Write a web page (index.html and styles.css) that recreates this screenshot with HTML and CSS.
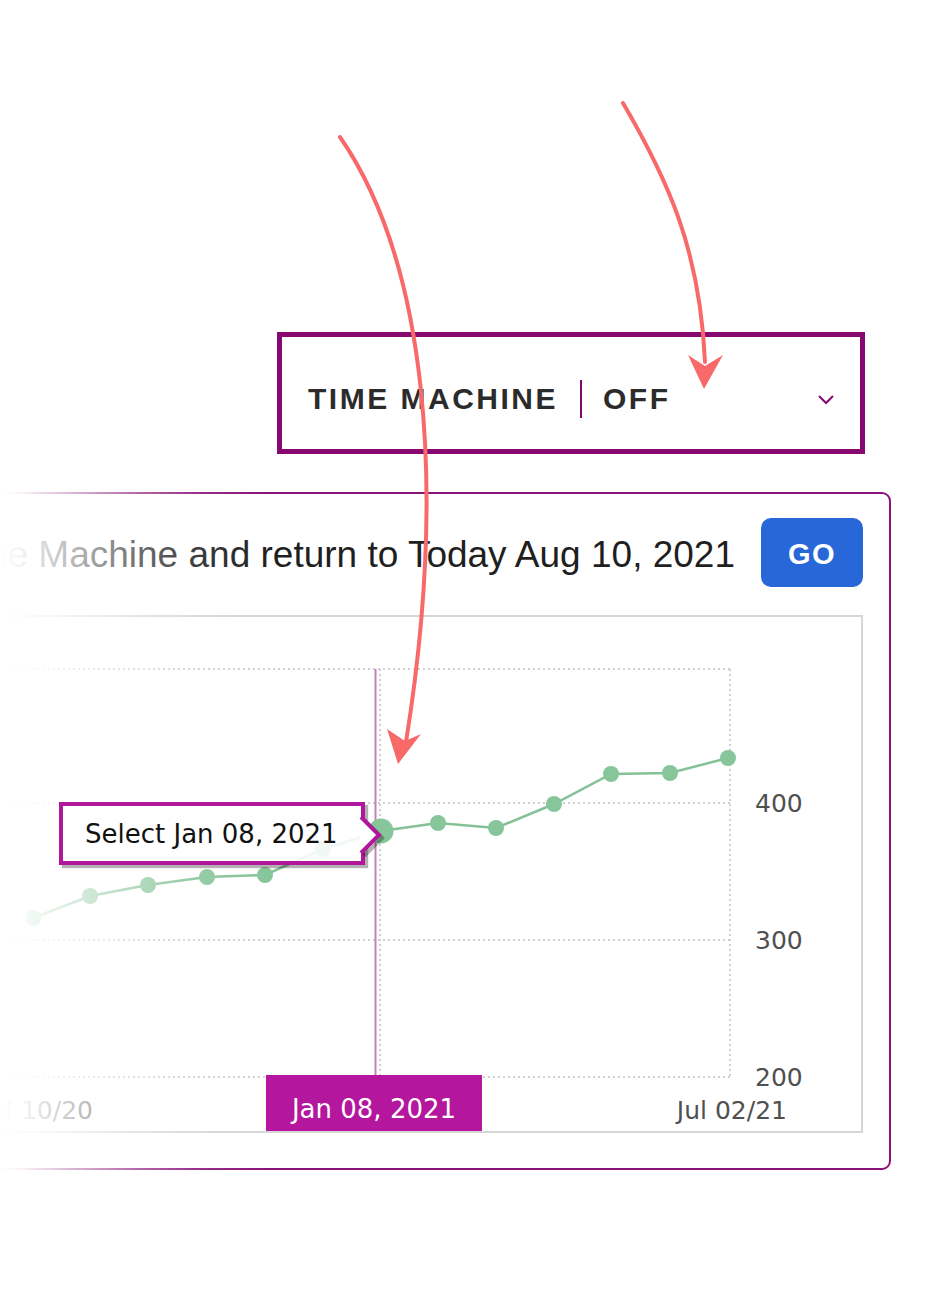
FILE: index.html
```html
<!DOCTYPE html>
<html lang="en">
<head>
    <meta charset="UTF-8">
    <meta name="viewport" content="width=device-width, initial-scale=1.0">
    <title>Time Machine</title>
    <link rel="stylesheet" href="styles.css">
</head>
<body>
    <div class="page">
        <div class="toggle">
            <span class="toggle-label">TIME MACHINE</span>
            <span class="toggle-sep"></span>
            <span class="toggle-state">OFF</span>
            <svg class="toggle-caret" width="18" height="11" viewBox="0 0 18 11">
                <polyline points="2,2 9,9 16,2" fill="none" stroke="#87096f" stroke-width="2"/>
            </svg>
        </div>

        <div class="card">
            <div class="card-head">
                <span class="card-title">Exit Time Machine and return to Today Aug 10, 2021</span>
                <button class="go-btn">GO</button>
            </div>
            <div class="chart">
                <svg class="plot" width="953" height="514" viewBox="-92 617 953 514">
                    <!-- grid -->
                    <g class="grid">
                        <line x1="-92" y1="669" x2="730" y2="669"/>
                        <line x1="-92" y1="803" x2="730" y2="803"/>
                        <line x1="-92" y1="940" x2="730" y2="940"/>
                        <line x1="-92" y1="1077" x2="730" y2="1077"/>
                        <line x1="380" y1="669" x2="380" y2="1077"/>
                        <line x1="730" y1="669" x2="730" y2="1077"/>
                    </g>
                    <line class="cursor" x1="375.5" y1="669" x2="375.5" y2="1076"/>

                    <!-- series -->
                    <polyline class="series" points="33,918 90,896 148,885 207,877 265,875 323,849 381,831 438,823 496,828 554,804 611,774 670,773 728,758"/>
                    <g class="dots">
                        <circle cx="33" cy="918" r="8"/>
                        <circle cx="90" cy="896" r="8"/>
                        <circle cx="148" cy="885" r="8"/>
                        <circle cx="207" cy="877" r="8"/>
                        <circle cx="265" cy="875" r="8"/>
                        <circle cx="323" cy="849" r="8"/>
                        <circle cx="381" cy="831" r="12.5"/>
                        <circle cx="438" cy="823" r="8"/>
                        <circle cx="496" cy="828" r="8"/>
                        <circle cx="554" cy="804" r="8"/>
                        <circle cx="611" cy="774" r="8"/>
                        <circle cx="670" cy="773" r="8"/>
                        <circle cx="728" cy="758" r="8"/>
                    </g>

                    <!-- axis labels -->
                    <g class="axis">
                        <text x="755" y="812">400</text>
                        <text x="755" y="949">300</text>
                        <text x="755" y="1086">200</text>
                        <text x="93" y="1119" text-anchor="end">Jul 10/20</text>
                        <text x="787" y="1119" text-anchor="end">Jul 02/21</text>
                    </g>
                    <rect class="date-box" x="266" y="1075" width="216" height="56"/>
                    <text class="date-text" x="374" y="1118" text-anchor="middle">Jan 08, 2021</text>
                </svg>
            </div>
        </div>

        <div class="fade"></div>

        <div class="tooltip">
            Select Jan 08, 2021
            <svg class="tooltip-tip" width="30" height="46" viewBox="0 0 30 46">
                <polyline points="4,4 22,22 4,40" transform="translate(3,3)" fill="none" stroke="rgba(0,0,0,0.3)" stroke-width="4"/>
                <polygon points="3,3 22,22 3,41" fill="#fff"/>
                <polyline points="4,4 22,22 4,40" fill="none" stroke="#b0179b" stroke-width="4"/>
            </svg>
        </div>

        <svg class="arrows" width="930" height="1290" viewBox="0 0 930 1290">
            <path d="M340,137 C425,260 448,480 406,742"/>
            <polygon points="398,764 387,729 405,741 421,734"/>
            <path d="M623,103 C668,180 700,250 705,362"/>
            <polygon points="704,389 688,355 705,366 723,355"/>
        </svg>
    </div>
</body>
</html>
```

FILE: styles.css
```css
* {
    margin: 0;
    padding: 0;
    box-sizing: border-box;
}

body {
    background-color: #fff;
    font-family: "Liberation Sans", Arial, sans-serif;
}

.page {
    position: relative;
    width: 930px;
    height: 1290px;
    overflow: hidden;
    padding-top: 332px;
}

/* time machine toggle */
.toggle {
    display: flex;
    align-items: center;
    width: 588px;
    height: 122px;
    margin-left: auto;
    margin-right: 65px;
    padding: 12px 25px 0 26px;
    border: 5px solid #87096f;
    color: #2b2b2b;
    font-size: 30px;
    font-weight: bold;
    line-height: 1;
    letter-spacing: 2.5px;
}

.toggle-sep {
    width: 2px;
    height: 38px;
    margin: 0 21px 0 22px;
    background-color: #87096f;
}

.toggle-caret {
    margin-left: auto;
}

/* card */
.card {
    display: flex;
    flex-direction: column;
    gap: 28px;
    height: 678px;
    margin: 38px 39px 0 -120px;
    padding: 24px 26px 35px 24px;
    border: 2px solid #8a1278;
    border-radius: 9px;
}

.card-head {
    display: flex;
    justify-content: flex-end;
    align-items: center;
    gap: 26px;
    height: 69px;
}

.card-title {
    flex-shrink: 0;
    margin-top: 4px;
    white-space: nowrap;
    font-size: 37px;
    line-height: 1;
    color: #1f1f1f;
}

.go-btn {
    flex-shrink: 0;
    width: 102px;
    height: 69px;
    padding-top: 4px;
    border: none;
    border-radius: 10px;
    background-color: #2767d8;
    color: #fff;
    font-family: "Liberation Sans", Arial, sans-serif;
    font-size: 29px;
    font-weight: bold;
    line-height: 1;
    letter-spacing: 1.5px;
}

.chart {
    height: 518px;
    border: 2px solid #d6d6d6;
}

.plot {
    display: block;
}

.grid line {
    stroke: #cfcfcf;
    stroke-width: 2;
    stroke-dasharray: 2 3;
}

.cursor {
    stroke: #c680bc;
    stroke-width: 2;
}

.series {
    fill: none;
    stroke: #84c196;
    stroke-width: 2.5;
}

.dots circle {
    fill: #87c59a;
}

.axis text {
    font-family: "DejaVu Sans", Verdana, sans-serif;
    font-size: 25px;
    fill: #505050;
}

.date-box {
    fill: #b4169d;
}

.date-text {
    font-family: "DejaVu Sans", Verdana, sans-serif;
    font-size: 26px;
    fill: #fff;
}

/* left edge fade */
.fade {
    position: absolute;
    left: 0;
    top: 484px;
    width: 300px;
    height: 700px;
    background: linear-gradient(to right,
        #fff 0,
        rgba(255, 255, 255, 0.95) 20px,
        rgba(255, 255, 255, 0.65) 80px,
        rgba(255, 255, 255, 0.35) 140px,
        rgba(255, 255, 255, 0.12) 200px,
        rgba(255, 255, 255, 0) 270px);
}

/* hover tooltip */
.tooltip {
    position: absolute;
    left: 59px;
    top: 802px;
    z-index: 2;
    display: flex;
    align-items: center;
    width: 306px;
    height: 63px;
    padding-left: 22px;
    border: 4px solid #b0179b;
    background-color: rgba(255, 255, 255, 0.88);
    box-shadow: 3px 3px 1px rgba(0, 0, 0, 0.3);
    font-family: "DejaVu Sans", Verdana, sans-serif;
    font-size: 26px;
    color: #111;
    white-space: nowrap;
}

.tooltip-tip {
    position: absolute;
    left: 294px;
    top: 7px;
    overflow: visible;
}

/* annotation arrows */
.arrows {
    position: absolute;
    left: 0;
    top: 0;
    z-index: 3;
    pointer-events: none;
}

.arrows path {
    fill: none;
    stroke: #f86a6a;
    stroke-width: 4;
    stroke-linecap: round;
}

.arrows polygon {
    fill: #f86a6a;
}
```
